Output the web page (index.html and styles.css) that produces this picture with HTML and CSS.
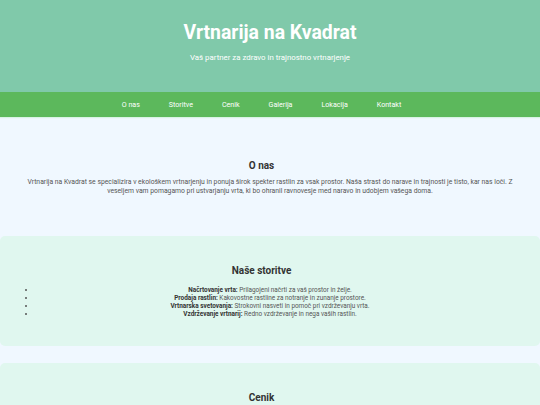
FILE: index.html
```html
<!DOCTYPE html>
<html lang="sl">
<head>
<meta charset="utf-8">
<title>Vrtnarija na Kvadrat</title>
<link rel="stylesheet" href="styles.css">
</head>
<body>
<header class="site-header">
  <h1 class="site-title">Vrtnarija na Kvadrat</h1>
  <p class="site-tagline">Vaš partner za zdravo in trajnostno vrtnarjenje</p>
</header>
<nav class="site-nav">
  <a href="#onas">O nas</a>
  <a href="#storitve">Storitve</a>
  <a href="#cenik">Cenik</a>
  <a href="#galerija">Galerija</a>
  <a href="#lokacija">Lokacija</a>
  <a href="#kontakt">Kontakt</a>
</nav>
<main class="content">
  <section id="onas" class="section section-plain">
    <h2 class="section-title">O nas</h2>
    <p class="section-text">Vrtnarija na Kvadrat se specializira v ekološkem vrtnarjenju in ponuja širok spekter rastlin za vsak prostor. Naša strast do narave in trajnosti je tisto, kar nas loči. Z veseljem vam pomagamo pri ustvarjanju vrta, ki bo ohranil ravnovesje med naravo in udobjem vašega doma.</p>
  </section>
  <section id="storitve" class="section section-card">
    <h2 class="section-title">Naše storitve</h2>
    <ul class="service-list">
      <li><strong>Načrtovanje vrta:</strong> Prilagojeni načrti za vaš prostor in želje.</li>
      <li><strong>Prodaja rastlin:</strong> Kakovostne rastline za notranje in zunanje prostore.</li>
      <li><strong>Vrtnarska svetovanja:</strong> Strokovni nasveti in pomoč pri vzdrževanju vrta.</li>
      <li><strong>Vzdrževanje vrtnarij:</strong> Redno vzdrževanje in nega vaših rastlin.</li>
    </ul>
  </section>
  <section id="cenik" class="section section-card">
    <h2 class="section-title">Cenik</h2>
  </section>
</main>
</body>
</html>
```
FILE: styles.css
```css
* { box-sizing: border-box; }

html, body {
  margin: 0;
  padding: 0;
}

body {
  font-family: Roboto, "Liberation Sans", sans-serif;
  background: #f0f8ff;
  color: #333;
}

.site-header {
  background: #80c9aa;
  color: #fff;
  text-align: center;
  padding: 21px 0 29px;
  height: 92px;
}

.site-title {
  margin: 0;
  font-size: 19.4px;
  line-height: 24px;
  font-weight: 700;
}

.site-tagline {
  margin: 8px 0 0;
  font-size: 7.85px;
  line-height: 10px;
}

.site-nav {
  background: #5cb85c;
  height: 25px;
  display: flex;
  justify-content: center;
  align-items: center;
  gap: 29px;
  padding-right: 17px;
  box-shadow: 0 1px 1px rgba(200, 240, 210, 0.6);
}

.site-nav a {
  color: #fff;
  text-decoration: none;
  font-size: 7.1px;
  line-height: 10px;
}

.content {
  display: flex;
  flex-direction: column;
  gap: 17px;
}

.section {
  text-align: center;
}

.section-plain {
  padding: 42px 20px 23px;
}

.section-card {
  background: #e0f7ef;
  border-radius: 5px;
  padding: 28px 20px;
}

.section-title {
  margin: 0;
  padding-right: 17px;
  font-size: 10px;
  line-height: 13px;
  font-weight: 700;
  color: #333;
}

.section-text {
  margin: 6px 0 0;
  font-size: 6.8px;
  line-height: 9px;
  color: #555;
}

.service-list {
  margin: 9px 0 0;
  padding: 0 16px;
  font-size: 6.4px;
  line-height: 8px;
  color: #555;
}

.service-list strong {
  color: #333;
}
```
